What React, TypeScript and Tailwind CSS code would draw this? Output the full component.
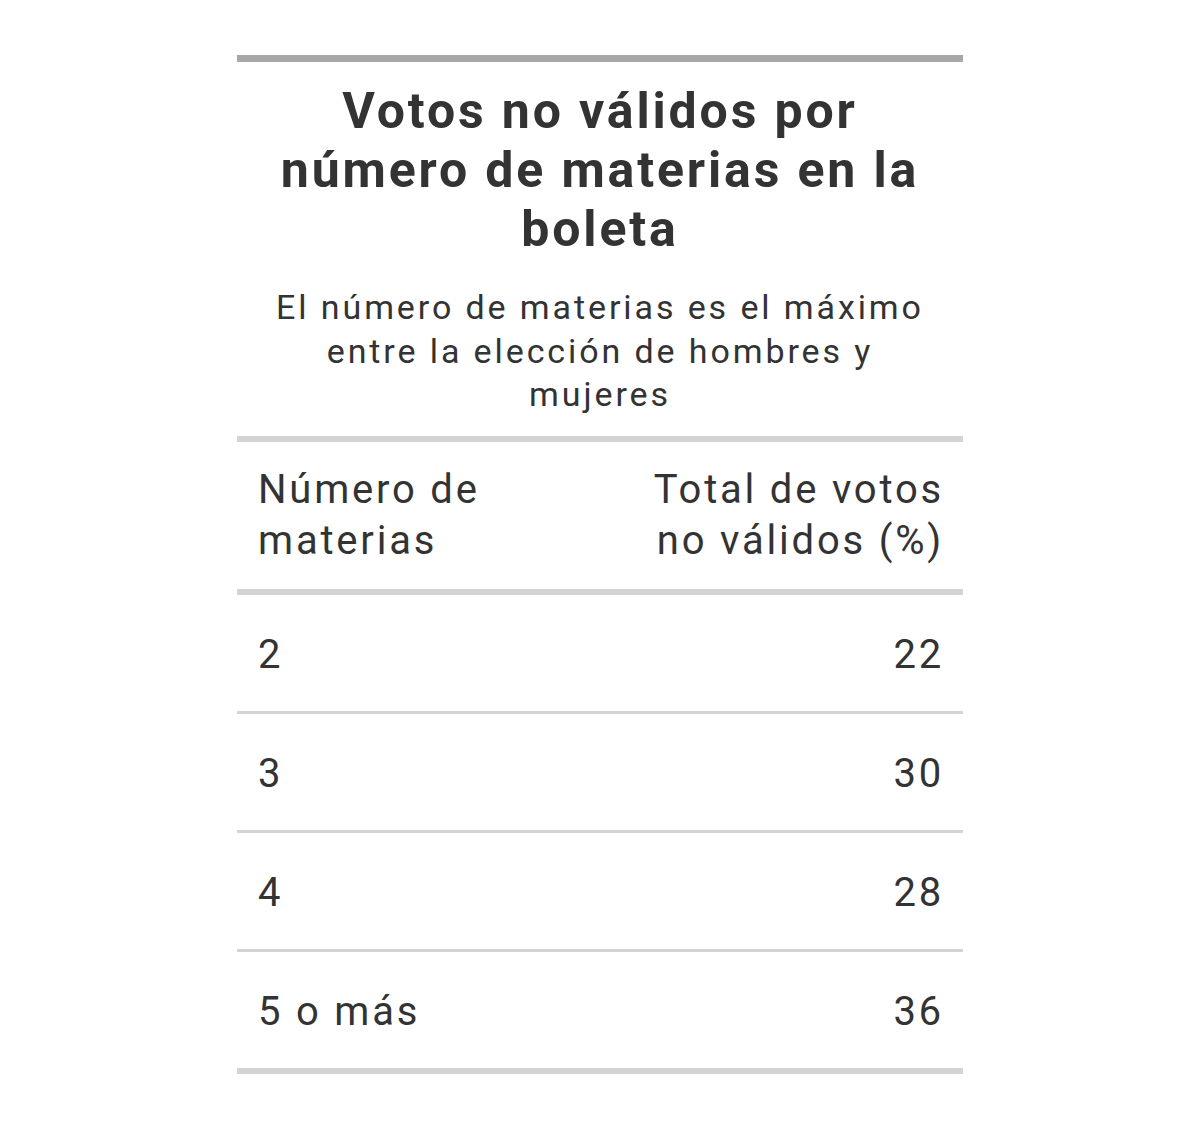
import React from "react";

type Row = {
  label: string;
  value: number;
};

const rows: Row[] = [
  { label: "2", value: 22 },
  { label: "3", value: 30 },
  { label: "4", value: 28 },
  { label: "5 o más", value: 36 },
];

const App: React.FC = () => {
  return (
    <div className="min-h-screen bg-white flex justify-center items-start pt-[55px] font-['Roboto',_'Liberation_Sans',_sans-serif] text-[#333333]">
      <table className="w-[726px] border-collapse table-fixed">
        <thead>
          <tr>
            <th
              colSpan={2}
              className="border-t-[7px] border-[#a8a8a8] px-[21px] pt-[20px] pb-0 text-center text-[50px] leading-[59px] font-bold tracking-[2.85px]"
            >
              Votos no válidos por número de materias en la boleta
            </th>
          </tr>
          <tr>
            <th
              colSpan={2}
              className="border-b-[6px] border-[#d3d3d3] px-[30px] pt-[27px] pb-[19px] text-center text-[34px] leading-[43.5px] font-normal tracking-[2.9px]"
            >
              El número de materias es el máximo entre la elección de hombres y mujeres
            </th>
          </tr>
          <tr className="border-b-[6px] border-[#d3d3d3]">
            <th className="w-1/2 pl-[21px] pr-[21px] pt-[22px] pb-[23px] text-left text-[40px] leading-[51px] font-normal tracking-[2.8px] align-bottom">
              Número de materias
            </th>
            <th className="w-1/2 pl-[21px] pr-[19px] pt-[22px] pb-[23px] text-right text-[40px] leading-[51px] font-normal tracking-[2.8px] align-bottom">
              Total de votos no válidos (%)
            </th>
          </tr>
        </thead>
        <tbody>
          {rows.map((row, i) => (
            <tr
              key={row.label}
              className={
                i === rows.length - 1
                  ? "border-b-[6px] border-[#d3d3d3]"
                  : "border-b-[3px] border-[#d3d3d3]"
              }
            >
              <td className="pl-[21px] pr-[21px] pt-[34px] pb-[30px] text-left text-[40px] leading-[52px] tracking-[2.8px]">
                {row.label}
              </td>
              <td className="pl-[21px] pr-[19px] pt-[34px] pb-[30px] text-right text-[40px] leading-[52px] tracking-[2.8px] tabular-nums">
                {row.value}
              </td>
            </tr>
          ))}
        </tbody>
      </table>
    </div>
  );
};

export default App;
